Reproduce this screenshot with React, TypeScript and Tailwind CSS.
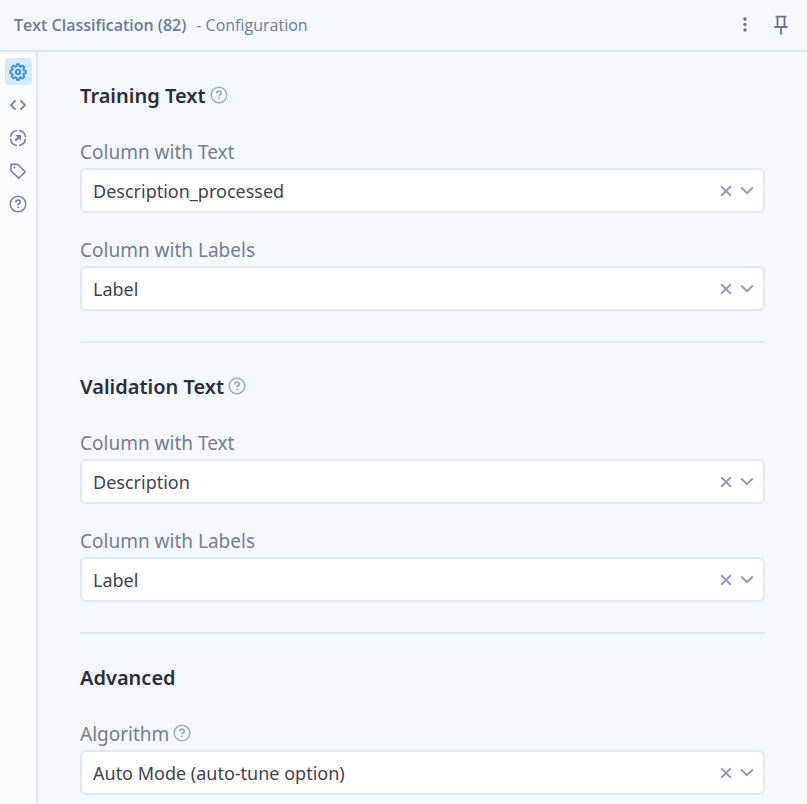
import { useId, useState, type ReactNode } from "react";

function HelpIcon({ className }: { className: string }) {
  return (
    <svg viewBox="0 0 18 18" fill="none" stroke="currentColor" className={className} aria-hidden="true">
      <circle cx="9" cy="9" r="7.8" strokeWidth="1.5" />
      <path d="M6.8 7.3c0-1.3 1-2.1 2.2-2.1s2.2.8 2.2 2c0 1.5-2.2 1.6-2.2 3.1" strokeWidth="1.7" />
      <path d="M9 11.6v1.7" strokeWidth="1.8" />
    </svg>
  );
}

function GearIcon() {
  return (
    <svg viewBox="0 0 24 24" fill="none" stroke="currentColor" strokeWidth="2.6" strokeLinejoin="round" className="size-[18px]" aria-hidden="true">
      <path d="M9.6 4.4 10.6 1.6h2.8l1 2.8 1.1.5 2.7-1.3 2.2 2.2-1.3 2.7.5 1.1 2.8 1v2.8l-2.8 1-.5 1.1 1.3 2.7-2.2 2.2-2.7-1.3-1.1.5-1 2.8h-2.8l-1-2.8-1.1-.5-2.7 1.3-2.2-2.2 1.3-2.7-.5-1.1-2.8-1v-2.8l2.8-1 .5-1.1-1.3-2.7 2.2-2.2 2.7 1.3z" />
      <circle cx="12" cy="12" r="2.9" />
    </svg>
  );
}

function CodeIcon() {
  return (
    <svg viewBox="0 0 18 18" fill="none" stroke="currentColor" strokeWidth="1.8" className="size-[18px]" aria-hidden="true">
      <path d="M6.6 4.4 2 9l4.6 4.6M11.4 4.4 16 9l-4.6 4.6" />
    </svg>
  );
}

function TargetIcon() {
  return (
    <svg viewBox="0 0 18 18" fill="none" stroke="currentColor" strokeWidth="1.6" className="size-[18px]" aria-hidden="true">
      <circle cx="9" cy="9" r="7.6" strokeDasharray="9.94 2" strokeDashoffset="-1" />
      <path d="M6.2 11.8l4-4" strokeWidth="2" />
      <path d="M6.2 6h5.8v5.8z" fill="currentColor" stroke="none" />
    </svg>
  );
}

function TagIcon() {
  return (
    <svg viewBox="0 0 18 18" fill="none" stroke="currentColor" strokeWidth="1.6" strokeLinejoin="round" className="size-[18px]" aria-hidden="true">
      <path d="M2 2.4h6.6l7.6 7.4-6.4 6.4L2 9z" />
      <circle cx="5.3" cy="5.6" r="1" fill="currentColor" stroke="none" />
    </svg>
  );
}

function PinIcon() {
  return (
    <svg viewBox="0 0 16 20" fill="none" stroke="currentColor" strokeWidth="1.8" className="h-5 w-4" aria-hidden="true">
      <path d="M2.6 1.6h10.8M4.5 1.6v9.6M11.5 1.6v9.6M1.4 12h13.2M8 12v7.4" />
    </svg>
  );
}

function HelpButton({ label }: { label: string }) {
  return (
    <button type="button" aria-label={label} className="pb-0.5 text-[#a3acc0]">
      <HelpIcon className="size-[18px]" />
    </button>
  );
}

function SelectField({ label, value, help }: { label: string; value: string; help?: boolean }) {
  const id = useId();
  const [selected, setSelected] = useState(value);
  return (
    <div className="flex flex-col gap-1">
      <div className="flex h-6 items-center gap-1">
        <label htmlFor={id} className="text-[19px] leading-6 text-[#747d95]">
          {label}
        </label>
        {help && <HelpButton label={"About " + label} />}
      </div>
      <div className="relative">
        <select
          id={id}
          value={selected}
          onChange={(e) => setSelected(e.target.value)}
          className="h-[45px] w-full appearance-none rounded-md border-2 border-[#e3e9f4] bg-white pr-14 pl-[11px] text-lg text-[#3f444d] outline-none"
        >
          <option value=""></option>
          <option value={value}>{value}</option>
        </select>
        <button
          type="button"
          aria-label={"Clear " + label}
          onClick={() => setSelected("")}
          className="absolute inset-y-0 right-[33px] flex w-3 items-center justify-center text-[#8d9dbd]"
        >
          <svg viewBox="0 0 12 12" fill="none" stroke="currentColor" strokeWidth="2" className="size-3" aria-hidden="true">
            <path d="M1.2 1.2l9.6 9.6M10.8 1.2 1.2 10.8" />
          </svg>
        </button>
        <svg
          viewBox="0 0 14 10"
          fill="none"
          stroke="currentColor"
          strokeWidth="2"
          className="pointer-events-none absolute inset-y-0 right-[11px] h-full w-3.5 text-[#8d9dbd]"
          aria-hidden="true"
        >
          <path d="M1.2 2 7 7.6 12.8 2" />
        </svg>
      </div>
    </div>
  );
}

function Section({ title, help, children }: { title: string; help?: boolean; children: ReactNode }) {
  return (
    <section className="border-t-2 border-[#e3e8f3] pt-[30px] pb-[30px] first:border-t-0">
      <div className="mb-[30px] flex h-7 items-center gap-1">
        <h2 className="text-xl leading-7 font-semibold text-[#2a2e39]">{title}</h2>
        {help && <HelpButton label={"About " + title} />}
      </div>
      <div className="flex flex-col gap-[25px]">{children}</div>
    </section>
  );
}

const tools = [
  { label: "Configuration", icon: <GearIcon />, active: true },
  { label: "Code", icon: <CodeIcon /> },
  { label: "Target", icon: <TargetIcon /> },
  { label: "Tags", icon: <TagIcon /> },
  { label: "Help", icon: <HelpIcon className="size-[18px]" /> },
];

export default function App() {
  return (
    <div className="flex h-screen flex-col overflow-hidden bg-[#f5f8fd] font-['Noto_Sans','Open_Sans',sans-serif]">
      <header className="flex h-[52px] shrink-0 items-center border-b-2 border-[#e0e6f2] pr-[18px] pl-3.5 font-['Open_Sans','Noto_Sans',sans-serif] text-base text-[#6f7b96]">
        <h1 className="font-semibold">Text Classification (82)</h1>
        <span className="ml-2.5">- Configuration</span>
        <div className="ml-auto flex items-center gap-5 text-[#66748f]">
          <button type="button" aria-label="More options">
            <svg viewBox="0 0 16 18" fill="currentColor" className="h-[18px] w-4" aria-hidden="true">
              <circle cx="8" cy="3" r="1.7" />
              <circle cx="8" cy="8.5" r="1.7" />
              <circle cx="8" cy="14" r="1.7" />
            </svg>
          </button>
          <button type="button" aria-label="Pin panel">
            <PinIcon />
          </button>
        </div>
      </header>
      <div className="flex min-h-0 grow">
        <nav className="flex w-[38px] shrink-0 flex-col items-center gap-1.5 border-r-2 border-[#e0e6f2] bg-[#fbfcfe] pt-1.5">
          {tools.map((t) => (
            <button
              key={t.label}
              type="button"
              aria-label={t.label}
              className={
                t.active
                  ? "flex size-[27px] items-center justify-center rounded bg-[#d5eaff] text-[#3b8fe0]"
                  : "flex size-[27px] items-center justify-center rounded text-[#74829f]"
              }
            >
              {t.icon}
            </button>
          ))}
        </nav>
        <main className="min-w-0 grow overflow-hidden pr-[42px] pl-[42px]">
          <Section title="Training Text" help>
            <SelectField label="Column with Text" value="Description_processed" />
            <SelectField label="Column with Labels" value="Label" />
          </Section>
          <Section title="Validation Text" help>
            <SelectField label="Column with Text" value="Description" />
            <SelectField label="Column with Labels" value="Label" />
          </Section>
          <Section title="Advanced">
            <SelectField label="Algorithm" value="Auto Mode (auto-tune option)" help />
          </Section>
        </main>
      </div>
    </div>
  );
}
